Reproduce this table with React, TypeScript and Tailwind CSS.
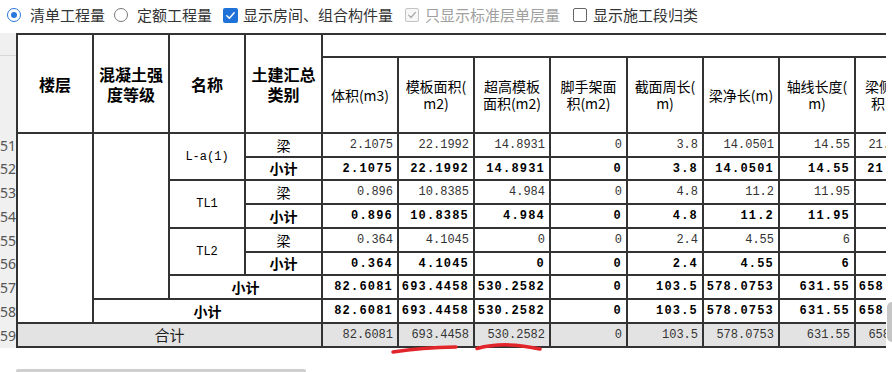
const cjk = "font-['Noto_Sans_CJK_SC',sans-serif]";
const mono = "font-['Liberation_Mono',monospace]";

const heads = [
  ["体积(m3)"],
  ["模板面积(", "m2)"],
  ["超高模板", "面积(m2)"],
  ["脚手架面", "积(m2)"],
  ["截面周长(", "m)"],
  ["梁净长(m)"],
  ["轴线长度(", "m)"],
  ["梁侧面面", "积(m2)"],
];

const la = ["2.1075", "22.1992", "14.8931", "0", "3.8", "14.0501", "14.55", "21.04449"];
const laSum = ["2.1075", "22.1992", "14.8931", "0", "3.8", "14.0501", "14.55", "21.0444"];
const tl1 = ["0.896", "10.8385", "4.984", "0", "4.8", "11.2", "11.95", "9.6"];
const tl2 = ["0.364", "4.1045", "0", "0", "2.4", "4.55", "6", "2.52"];
const sum = ["82.6081", "693.4458", "530.2582", "0", "103.5", "578.0753", "631.55", "658.0153"];

const rowNums = ["51", "52", "53", "54", "55", "56", "57", "58", "59"];
const rowHeights = ["h-[24px]", "h-[23px]", "h-[24px]", "h-[24px]", "h-[24px]", "h-[23px]", "h-[24px]", "h-[24px]", "h-[24px]"];

function Vals({ vals, bold, total }: { vals: string[]; bold?: boolean; total?: boolean }) {
  return (
    <>
      {vals.map((v, i) => (
        <div
          key={i}
          className={`flex items-center justify-end pr-1 whitespace-nowrap text-[12px] ${mono} ${
            bold ? "font-bold tracking-[1.2px] text-black" : "text-[#333]"
          } ${total ? "bg-[#e3e3e3]" : "bg-white"}`}
        >
          {v}
        </div>
      ))}
    </>
  );
}

function Kind({ bold, children }: { bold?: boolean; children: string }) {
  return (
    <div
      className={`flex items-center justify-center bg-white text-[14px] text-black ${cjk} ${
        bold ? "font-bold" : ""
      }`}
    >
      {children}
    </div>
  );
}

function Name({ children }: { children: string }) {
  return (
    <div className={`row-span-2 flex items-center justify-center bg-white text-[12px] text-black ${mono}`}>
      {children}
    </div>
  );
}

function HeadCell({ children }: { children: React.ReactNode }) {
  return (
    <div
      className={`row-span-2 flex items-center justify-center bg-white text-center text-[16px] font-bold leading-[20px] text-black ${cjk}`}
    >
      <div>{children}</div>
    </div>
  );
}

function Radio({ on }: { on?: boolean }) {
  return (
    <span
      className={`flex h-[14px] w-[14px] shrink-0 items-center justify-center rounded-full border bg-white ${
        on ? "border-[#2a78dc]" : "border-[#777]"
      }`}
    >
      {on && <span className="h-[6px] w-[6px] rounded-full bg-[#2a78dc]" />}
    </span>
  );
}

function Check({ on, disabled }: { on?: boolean; disabled?: boolean }) {
  if (on && !disabled) {
    return (
      <span className="flex h-[15px] w-[15px] shrink-0 items-center justify-center rounded-[2px] bg-[#1f72d8]">
        <svg width="11" height="11" viewBox="0 0 12 12" fill="none">
          <path d="M2 6.2 L4.8 9 L10 3" stroke="white" strokeWidth="1.6" strokeLinecap="round" strokeLinejoin="round" />
        </svg>
      </span>
    );
  }
  return (
    <span
      className={`flex h-[14px] w-[14px] shrink-0 items-center justify-center rounded-[2px] border ${
        disabled ? "border-[#c4c4c4] bg-[#f7f7f7]" : "border-[#666] bg-white"
      }`}
    >
      {on && (
        <svg width="10" height="10" viewBox="0 0 12 12" fill="none">
          <path d="M2 6.2 L4.8 9 L10 3" stroke="#aaa" strokeWidth="1.5" strokeLinecap="round" strokeLinejoin="round" />
        </svg>
      )}
    </span>
  );
}

export default function App() {
  return (
    <div className="relative h-[372px] w-[892px] overflow-hidden bg-white">
      {/* options bar */}
      <div className={`flex h-[30px] items-center pl-[7px] text-[15px] text-[#333] ${cjk}`}>
        <Radio on />
        <span className="ml-[9px]">清单工程量</span>
        <span className="ml-[9px]">
          <Radio />
        </span>
        <span className="ml-[9px]">定额工程量</span>
        <span className="ml-[11px]">
          <Check on />
        </span>
        <span className="ml-[5px]">显示房间、组合构件量</span>
        <span className="ml-[12px]">
          <Check on disabled />
        </span>
        <span className="ml-[6px] text-[#a0a0a0]">只显示标准层单层量</span>
        <span className="ml-[13px]">
          <Check />
        </span>
        <span className="ml-[6px]">显示施工段归类</span>
      </div>

      <div className="mt-[3px] flex">
        <div className="flex w-[886px] shrink-0 flex-col overflow-hidden">
          <div className="flex">
            {/* row numbers */}
            <div className="flex w-[16px] shrink-0 flex-col bg-[#f0f0f0]">
              <div className="h-[23px] border-b border-[#d8d8d8]" />
              <div className="h-[77px]" />
              {rowNums.map((n, i) => (
                <div
                  key={n}
                  className={`flex items-center justify-end whitespace-nowrap text-[14px] text-[#555] font-['Noto_Sans',sans-serif] ${rowHeights[i]}`}
                >
                  {n}
                </div>
              ))}
            </div>

            {/* table */}
            <div className="grid w-max shrink-0 grid-cols-[74px_74px_74px_75px_74px_74px_74px_75px_74px_74px_74px_74px] grid-rows-[21px_74px_22px_21px_22px_22px_22px_21px_22px_22px_22px] gap-[2px] bg-[#333] p-[2px]">
              <HeadCell>楼层</HeadCell>
              <HeadCell>
                混凝土强
                <br />
                度等级
              </HeadCell>
              <HeadCell>名称</HeadCell>
              <HeadCell>
                土建汇总
                <br />
                类别
              </HeadCell>
              <div className="col-span-8 bg-white" />
              {heads.map((h, i) => (
                <div
                  key={i}
                  className={`flex items-center justify-center bg-white text-center text-[14px] leading-[17px] text-black whitespace-nowrap ${cjk}`}
                >
                  <div>
                    {h.map((l) => (
                      <div key={l}>{l}</div>
                    ))}
                  </div>
                </div>
              ))}

              {/* 51 */}
              <div className="row-span-8 bg-white" />
              <div className="row-span-7 bg-white" />
              <Name>L-a(1)</Name>
              <Kind>梁</Kind>
              <Vals vals={la} />
              {/* 52 */}
              <Kind bold>小计</Kind>
              <Vals vals={laSum} bold />
              {/* 53 */}
              <Name>TL1</Name>
              <Kind>梁</Kind>
              <Vals vals={tl1} />
              {/* 54 */}
              <Kind bold>小计</Kind>
              <Vals vals={tl1} bold />
              {/* 55 */}
              <Name>TL2</Name>
              <Kind>梁</Kind>
              <Vals vals={tl2} />
              {/* 56 */}
              <Kind bold>小计</Kind>
              <Vals vals={tl2} bold />
              {/* 57 */}
              <div className={`col-span-2 flex items-center justify-center bg-white text-[14px] font-bold text-black ${cjk}`}>
                小计
              </div>
              <Vals vals={sum} bold />
              {/* 58 */}
              <div className={`col-span-3 flex items-center justify-center bg-white text-[14px] font-bold text-black ${cjk}`}>
                小计
              </div>
              <Vals vals={sum} bold />
              {/* 59 */}
              <div className={`col-span-4 flex items-center justify-center bg-[#e3e3e3] text-[15px] text-[#222] ${cjk}`}>
                合计
              </div>
              <Vals vals={sum} total />
            </div>
          </div>

          <div className="ml-[16px] mt-[21px] h-[4px] w-[290px] rounded-full bg-[#cfcfcf]" />
        </div>

        {/* vertical scrollbar */}
        <div className="w-[6px] shrink-0">
          <div className="ml-[1px] mt-[269px] h-[40px] w-[5px] rounded-l-full bg-[#c6c6c6]" />
        </div>
      </div>

      {/* hand-drawn marks */}
      <svg className="pointer-events-none absolute left-0 top-0" width="892" height="372" viewBox="0 0 892 372" fill="none">
        <path d="M393 352 Q 422 347.5 456 347" stroke="#e1252a" strokeWidth="3.5" strokeLinecap="round" />
        <path d="M477 348.5 Q 505 341 540 349" stroke="#e1252a" strokeWidth="3.5" strokeLinecap="round" />
      </svg>
    </div>
  );
}
